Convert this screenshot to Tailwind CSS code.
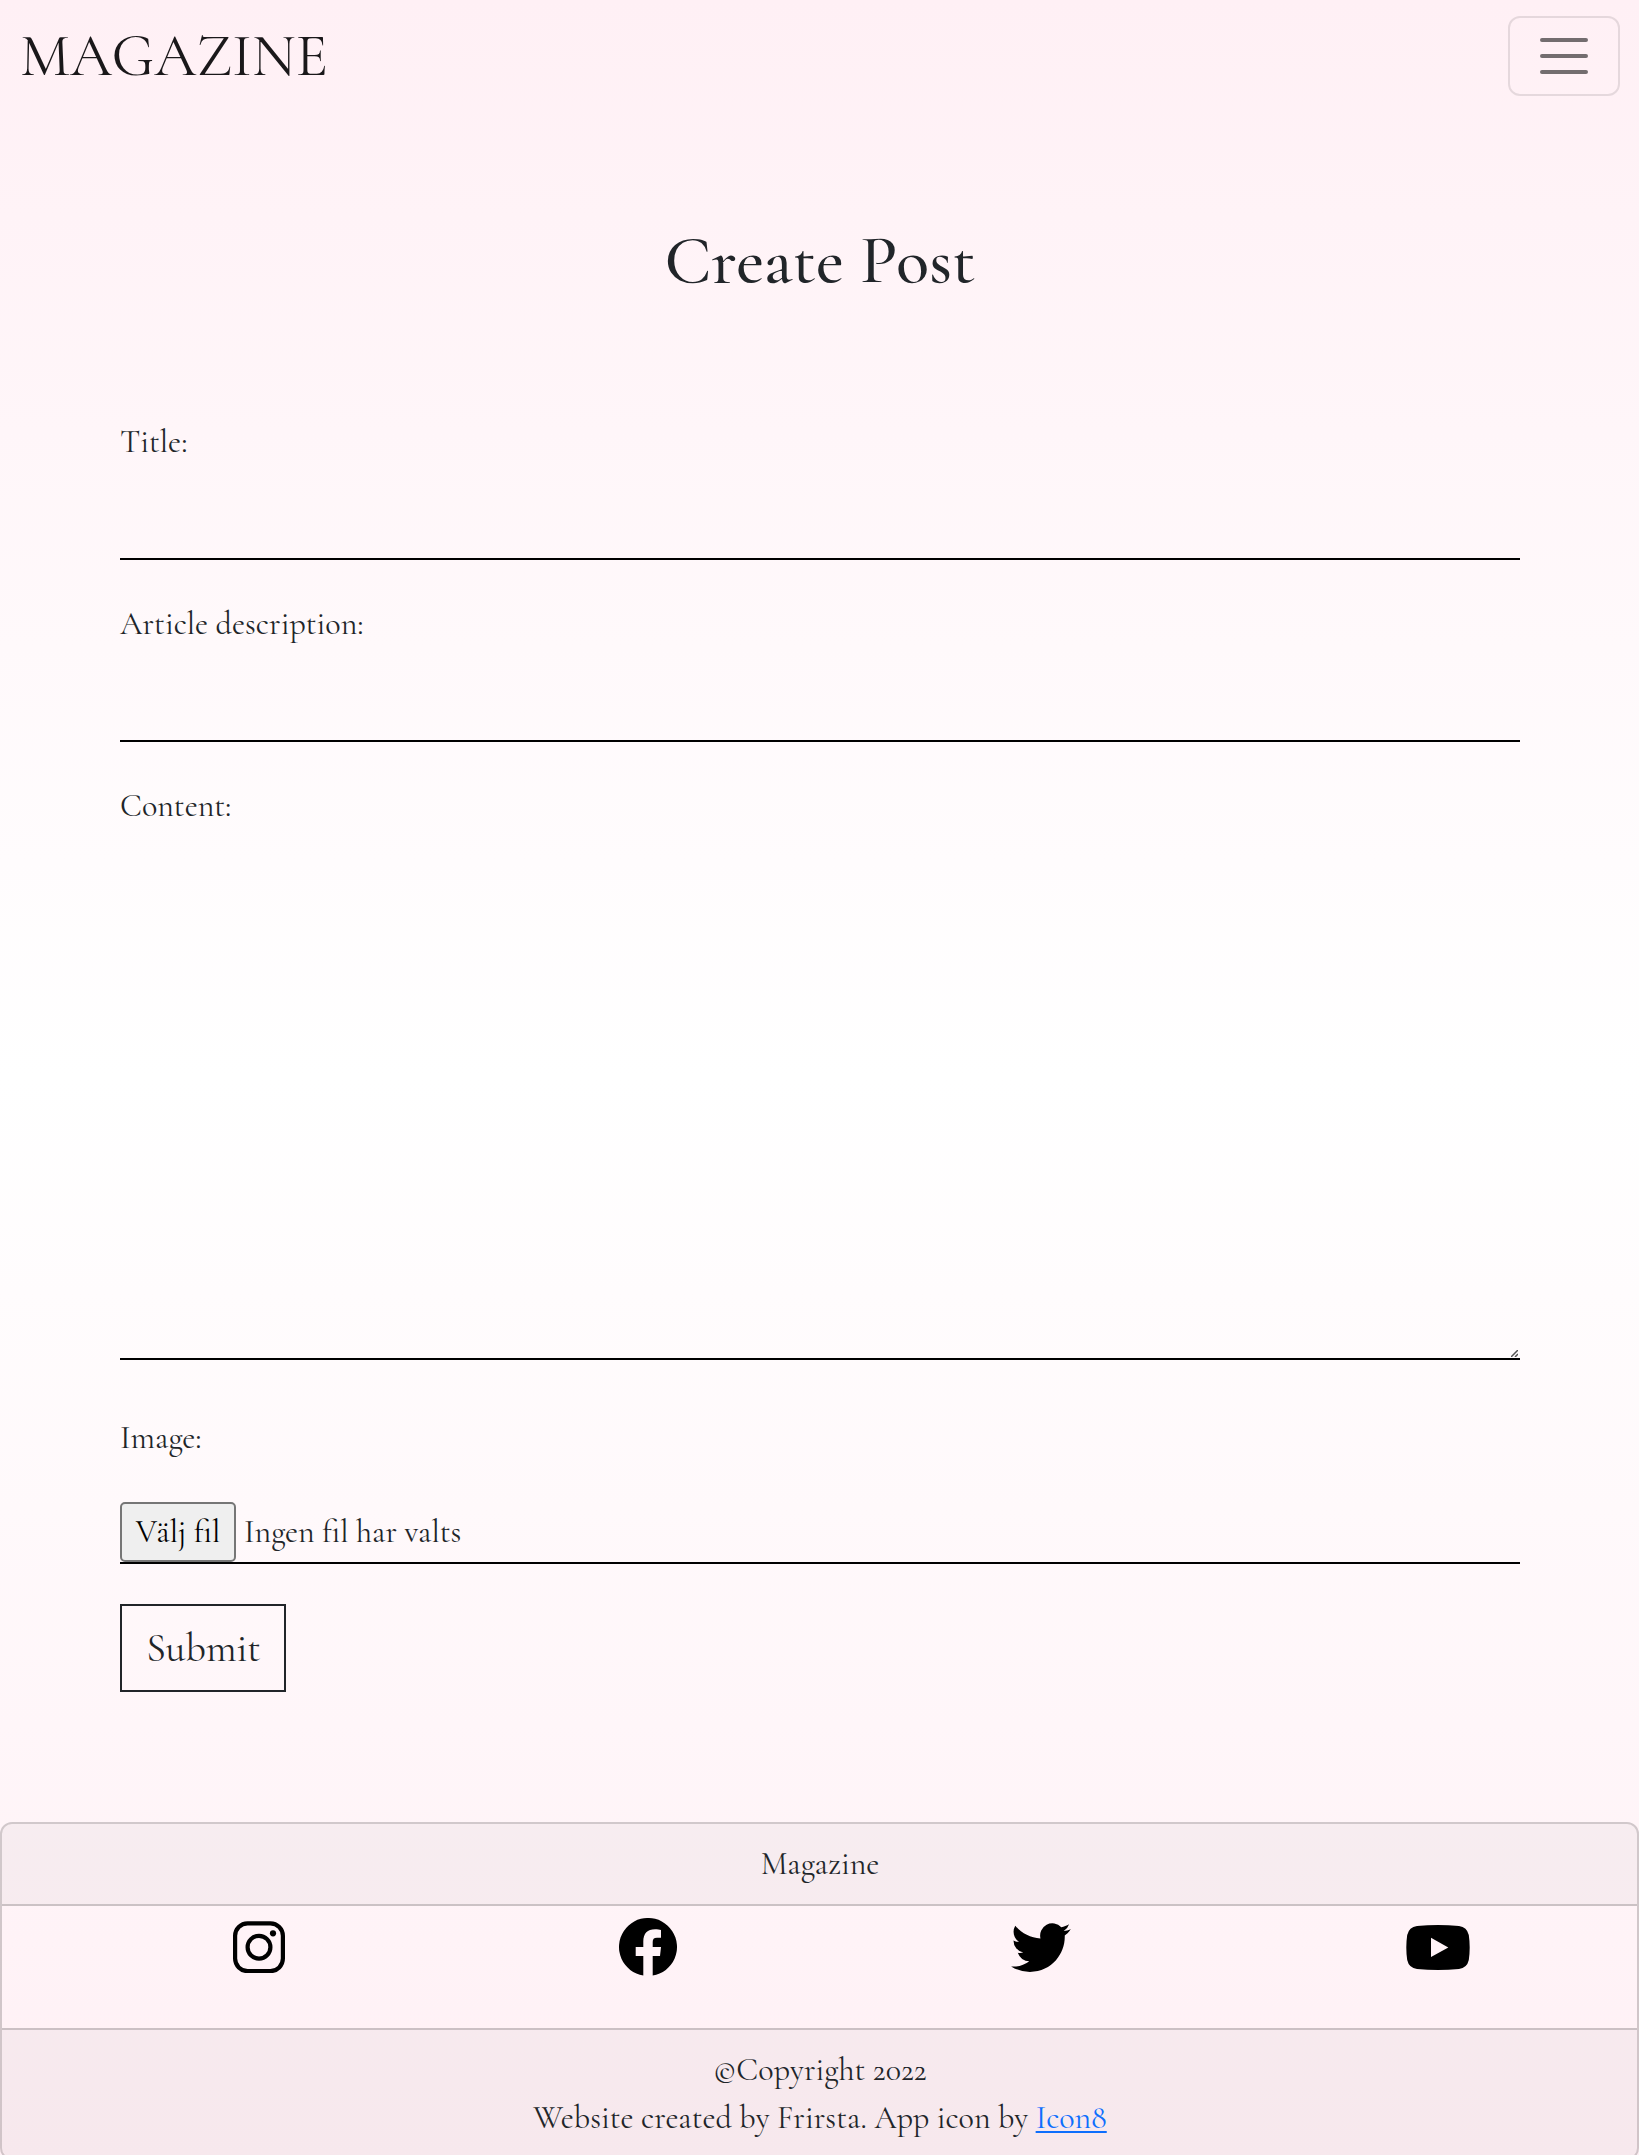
<!DOCTYPE html>
<html lang="sv">
<head>
<meta charset="utf-8">
<title>Magazine</title>
<script src="https://cdn.jsdelivr.net/npm/@tailwindcss/browser@4"></script>
</head>
<body class="h-[2155px] overflow-hidden bg-linear-to-b/srgb from-[#fff0f5] via-white to-[#fff0f5] font-['Cormorant_Garamond','Liberation_Serif',serif] text-[32px] leading-[48px] font-normal text-[#212529]">
  <nav class="flex h-28 items-center justify-between pr-[19px] pl-5">
    <a class="text-[60px] leading-[80px] text-[#1a181a]">MAGAZINE</a>
    <button class="flex h-20 w-28 items-center justify-center rounded-xl border-2 border-black/10" aria-label="Menu">
      <svg class="h-10 w-12" viewBox="0 0 48 40" fill="none" stroke="#000" stroke-opacity=".55" stroke-width="4" stroke-linecap="round"><path d="M2 4h44M2 20h44M2 36h44"/></svg>
    </button>
  </nav>

  <main class="pr-[119px] pl-[120px] pt-[108px]">
    <h1 class="text-center text-[68.6px] leading-[82px] font-medium">Create Post</h1>
    <form class="flex flex-col pt-[116px]">
      <label>Title:</label>
      <input class="h-[94px] border-b-2 border-black">
      <label class="mt-10">Article description:</label>
      <input class="h-[94px] border-b-2 border-black">
      <label class="mt-10">Content:</label>
      <div class="relative flex h-[530px]">
        <textarea class="w-full resize-none border-b-2 border-black"></textarea>
        <svg class="absolute right-0.5 bottom-[3px] size-[7px]" viewBox="0 0 7 7" stroke="#555" stroke-width="1.5"><path d="M0 7L7 0M4 7L7 4"/></svg>
      </div>
      <label class="mt-[54px]">Image:</label>
      <div class="mt-10 flex h-[62px] border-b-2 border-black">
        <button type="button" class="h-[60px] w-[116px] rounded-[5px] border-2 border-[#767676] bg-[#efefef] text-black">Välj fil</button>
        <span class="py-1.5 pl-2">Ingen fil har valts</span>
      </div>
      <button type="button" class="mt-10 h-[88px] w-[166px] border-2 border-[#212529] pb-px pl-px text-[40px]">Submit</button>
    </form>
  </main>

  <footer class="mt-[130px] rounded-xl border-2 border-black/18">
    <div class="h-[82px] rounded-t-[10px] border-b-2 border-black/18 bg-black/3 py-4 pl-px text-center">Magazine</div>
    <div class="flex h-[122px] pt-3 pl-[231px]">
      <svg class="mt-[3px] size-[52px]" viewBox="0 0 52 52" fill="none" stroke="#000" stroke-width="4.2"><rect x="2.1" y="2.3" width="47.8" height="47.8" rx="12.5"/><circle cx="26" cy="26.2" r="11.4"/><circle cx="40" cy="12.3" r="3.1" fill="#000" stroke="none"/></svg>
      <svg class="ml-[334px] size-[58px]" viewBox="0 0 58 58"><path d="M24.3 57.6A29 29 0 1 1 33.7 57.6V38H41L42 29H33.7V24C33.7 21.2 34.8 19.7 38 19.7H42V12C40.5 11.6 38.5 11.3 36 11.3C28.5 11.3 24.3 15.5 24.3 23.6V29H16.7V38H24.3Z"/></svg>
      <svg class="mt-[5px] ml-[334px] h-[49px] w-[60px]" viewBox="0 2.1 24 19.7"><path d="M23.953 4.57a10 10 0 01-2.825.775 4.958 4.958 0 002.163-2.723c-.951.555-2.005.959-3.127 1.184a4.92 4.92 0 00-8.384 4.482C7.69 8.095 4.067 6.13 1.64 3.162a4.822 4.822 0 00-.666 2.475c0 1.71.87 3.213 2.188 4.096a4.904 4.904 0 01-2.228-.616v.06a4.923 4.923 0 003.946 4.827 4.996 4.996 0 01-2.212.085 4.936 4.936 0 004.604 3.417 9.867 9.867 0 01-6.102 2.105c-.39 0-.779-.023-1.17-.067a13.995 13.995 0 007.557 2.209c9.053 0 13.998-7.496 13.998-13.985 0-.21 0-.42-.015-.63A9.935 9.935 0 0024 4.59z"/></svg>
      <svg class="mt-[7px] ml-[335px] h-[45px] w-16" viewBox="0 0 64 45"><path fill-rule="evenodd" d="M11 1Q32-1 53 1Q61 2 62.8 10Q64.6 22.500 62.8 35Q61 43 53 44Q32 46 11 44Q3 43 1.200 35Q-.6 22.500 1.200 10Q3 2 11 1ZM25 12.700V32L42.300 22.400Z"/></svg>
    </div>
    <div class="rounded-b-[10px] border-t-2 border-black/18 bg-black/3 py-4 pl-px text-center">
      <p>©Copyright 2022</p>
      <p>Website created by Frirsta. App icon by <a class="text-[#0d6efd] underline decoration-2 underline-offset-[3px]">Icon8</a></p>
    </div>
  </footer>
</body>
</html>
